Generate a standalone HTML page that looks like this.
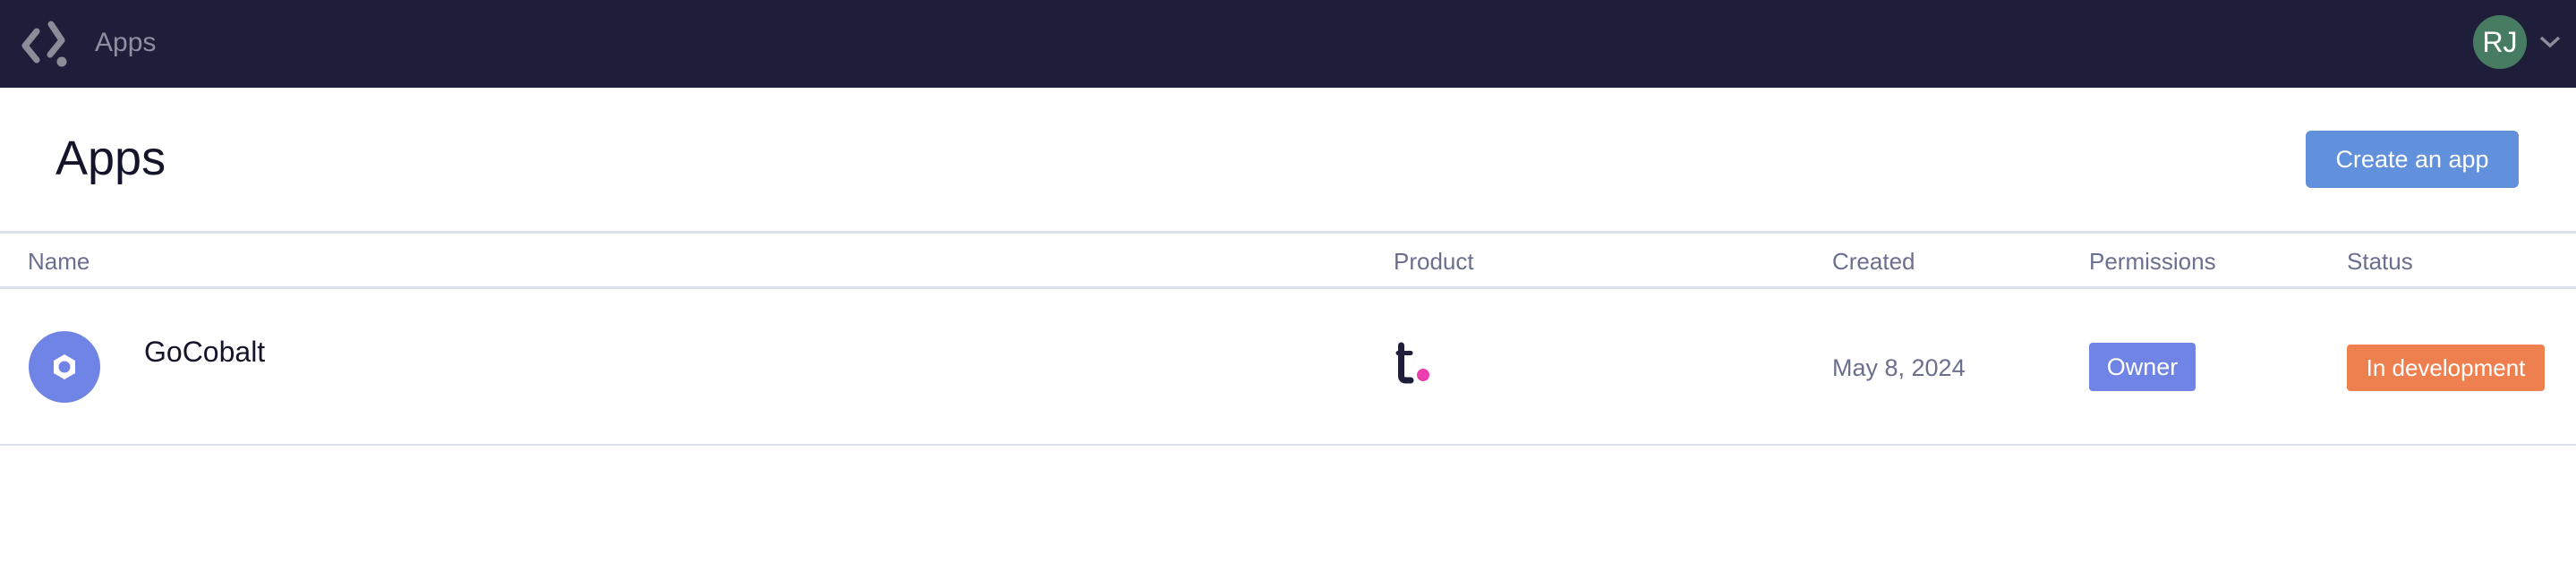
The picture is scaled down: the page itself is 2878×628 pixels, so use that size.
<!DOCTYPE html>
<html><head><style>
body{margin:0;width:2878px;height:628px;background:#fff;font-family:"Liberation Sans",sans-serif;position:relative;overflow:hidden}
.a{position:absolute;white-space:nowrap}
.nav{position:absolute;left:0;top:0;width:2878px;height:98px;background:#1e1e3a}
.hl{position:absolute;left:0;width:2878px;height:3px;background:#dde0ec}
.th{font-size:26px;color:#6b6f8e;top:277px}
</style></head><body>
<div class="nav"></div>
<svg class="a" style="left:0;top:0" width="90" height="90"><g fill="none" stroke="#8c8c98" stroke-width="7" stroke-linecap="round" stroke-linejoin="round"><path d="M41 35 L28 51 L41 67"/><path d="M57 27 L69 45 L56 61"/></g><circle cx="69" cy="69" r="5.5" fill="#8c8c98"/></svg>
<div class="a" style="left:106px;top:31px;font-size:30px;color:#8e8ea0">Apps</div>
<div class="a" style="left:2763px;top:17px;width:60px;height:60px;border-radius:50%;background:#487c62;color:#fff;font-size:32px;line-height:60px;text-align:center">RJ</div>
<svg class="a" style="left:2836px;top:38px" width="28" height="18"><path d="M3 4 L13 13 L23 4" fill="none" stroke="#8c8c98" stroke-width="3.5"/></svg>
<div class="a" style="left:62px;top:146px;font-size:54px;color:#14142b">Apps</div>
<div class="a" style="left:2576px;top:146px;width:238px;height:64px;border-radius:6px;background:#6190dc;color:#fff;font-size:27px;line-height:64px;text-align:center">Create an app</div>
<div class="hl" style="top:258px"></div>
<div class="a th" style="left:31px">Name</div>
<div class="a th" style="left:1557px">Product</div>
<div class="a th" style="left:2047px">Created</div>
<div class="a th" style="left:2334px">Permissions</div>
<div class="a th" style="left:2622px">Status</div>
<div class="hl" style="top:320px"></div>
<div class="a" style="left:32px;top:370px;width:80px;height:80px;border-radius:50%;background:#6f84e4"></div>
<svg class="a" style="left:55px;top:393px" width="34" height="34"><polygon points="17,3 29,10 29,24 17,31 5,24 5,10" fill="#fff"/><circle cx="17" cy="17" r="6.5" fill="#6f84e4"/></svg>
<div class="a" style="left:161px;top:375px;font-size:32px;color:#14142b">GoCobalt</div>
<svg class="a" style="left:1555px;top:380px" width="50" height="50"><path d="M10.5 6 V40 Q10.5 45 16 45 H21" fill="none" stroke="#1e1e3a" stroke-width="7" stroke-linecap="round"/><path d="M7 14.5 H21" stroke="#1e1e3a" stroke-width="5" stroke-linecap="round"/><circle cx="35" cy="39" r="7" fill="#ec3fae"/></svg>
<div class="a" style="left:2047px;top:396px;font-size:27px;color:#6b6f8e">May 8, 2024</div>
<div class="a" style="left:2334px;top:383px;width:119px;height:54px;border-radius:4px;background:#6f84e4;color:#fff;font-size:27px;line-height:54px;text-align:center">Owner</div>
<div class="a" style="left:2622px;top:385px;width:221px;height:52px;border-radius:4px;background:#ee8050;color:#fff;font-size:26px;line-height:52px;text-align:center">In development</div>
<div class="hl" style="top:496px;height:2px"></div>
</body></html>
